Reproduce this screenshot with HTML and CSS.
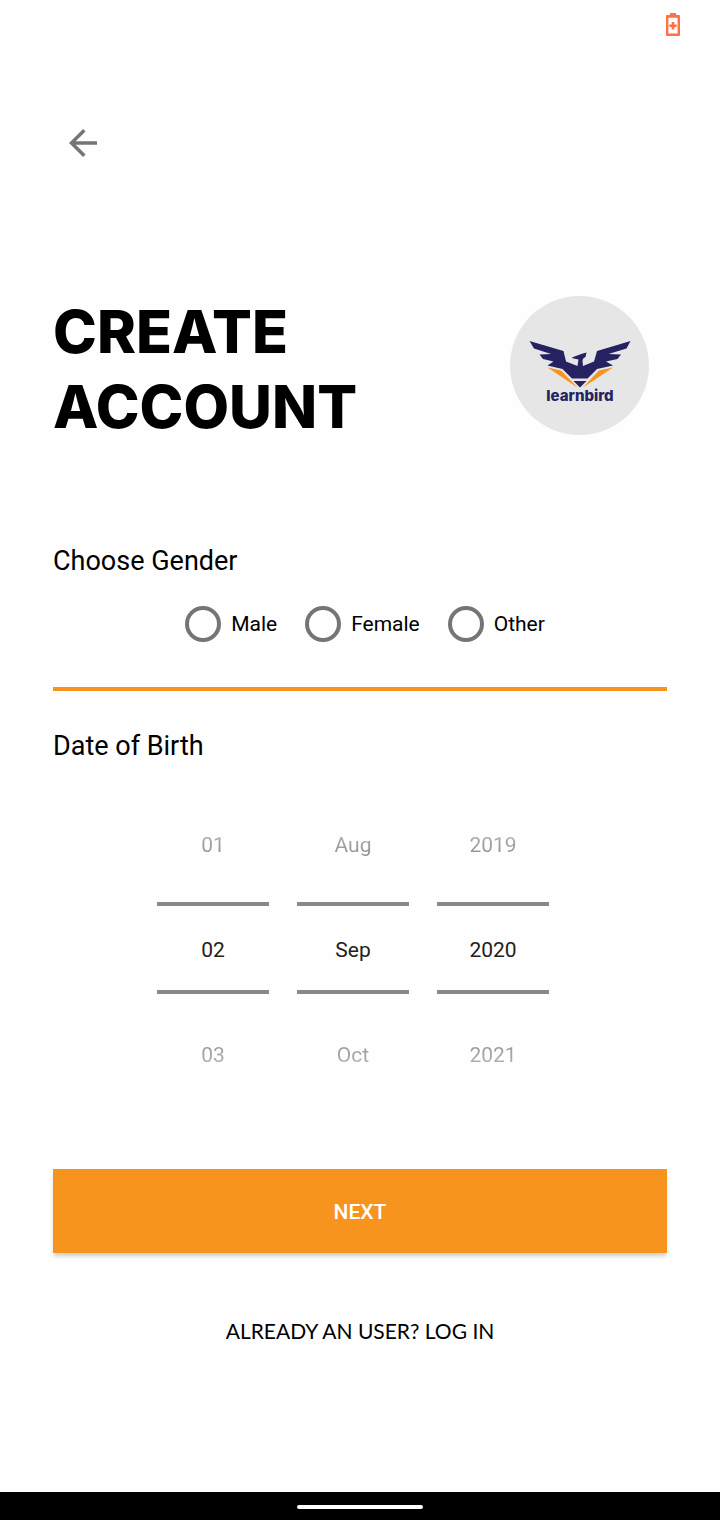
FILE: index.html
```html
<!DOCTYPE html>
<html lang="en">
<head>
<meta charset="utf-8">
<meta name="viewport" content="width=device-width, initial-scale=1">
<title>Create account</title>
<link rel="stylesheet" href="styles.css">
</head>
<body>
<header class="status-bar">
  <svg class="battery" viewBox="0 0 14 23" role="img" aria-label="Battery saver">
    <path fill="#ff7043" fill-rule="evenodd" d="M4 0h6v2h3q1 0 1 1v19q0 1-1 1H1q-1 0-1-1V3q0-1 1-1h3zM2.400 4.800v15.600h9.200V4.800z"/>
    <path fill="#ff7043" d="M5.700 9h2.600v2.400h2.400v2.600H8.300v2.400H5.700V14H3.300v-2.600h2.400z"/>
  </svg>
</header>
<main class="screen">
  <button class="back" type="button" aria-label="Back">
    <svg class="back-icon" viewBox="0 0 28 28" fill="none" stroke="#757575" stroke-width="3.500"><path d="M28 14H3M15.300 1.300L2.500 14l12.800 12.700"/></svg>
  </button>
  <div class="intro">
    <h1 class="title">CREATE<br>ACCOUNT</h1>
    <svg class="logo" viewBox="0 0 139 139" role="img" aria-label="learnbird">
      <circle cx="69.500" cy="69.500" r="69.500" fill="#e6e6e6"/>
      <g fill="#262262">
        <path d="M19.500 45L53.500 55L56 65.500L67.500 70L68.500 63.500L61.500 62Q67 59 76.500 56.500L75.500 61Q72.500 62 72.500 65L73 70L84 65.500L87 55L120.500 45L116.500 52.500L98.500 58L111 58.500L107.500 63L96 65.500L103 69.500L87 73L77.500 82.500H62L52.500 73L37.500 69.500L43.500 65.500L33 63L29.500 58.500L41 58L24 52.500Z"/>
        <path d="M63.500 85H76.500L70 91.500Z"/>
      </g>
      <g fill="#f7941d"><path d="M37.500 71.500L51 74.500L67.500 91.500Z"/><path d="M103 71.500L89 74.500L73 91.500Z"/></g>
      <text class="logo-word" x="70" y="105" text-anchor="middle">learnbird</text>
    </svg>
  </div>
  <form class="form">
    <fieldset class="gender">
      <legend class="label">Choose Gender</legend>
      <div class="options">
        <label class="option"><input class="radio" type="radio" name="gender" value="male">Male</label>
        <label class="option"><input class="radio" type="radio" name="gender" value="female">Female</label>
        <label class="option"><input class="radio" type="radio" name="gender" value="other">Other</label>
      </div>
    </fieldset>
    <fieldset class="birth">
      <legend class="label">Date of Birth</legend>
      <div class="pickers">
        <div class="picker">
          <button class="step prev" type="button">01</button>
          <input class="value" type="text" aria-label="Day" value="02">
          <button class="step next" type="button">03</button>
        </div>
        <div class="picker">
          <button class="step prev" type="button">Aug</button>
          <input class="value" type="text" aria-label="Month" value="Sep">
          <button class="step next" type="button">Oct</button>
        </div>
        <div class="picker">
          <button class="step prev" type="button">2019</button>
          <input class="value" type="text" aria-label="Year" value="2020">
          <button class="step next" type="button">2021</button>
        </div>
      </div>
    </fieldset>
    <button class="submit" type="submit">NEXT</button>
  </form>
  <a class="login" href="#login">ALREADY AN USER? LOG IN</a>
</main>
<footer class="nav-bar"><div class="handle"></div></footer>
</body>
</html>
```
FILE: styles.css
```css
* { box-sizing: border-box; }

body {
  margin: 0;
  min-height: 100vh;
  display: flex;
  flex-direction: column;
  background: #fefefe;
  color: #000;
  font-family: Roboto, sans-serif;
  font-size: 21px;
  line-height: 28px;
}

button, input { font: inherit; color: inherit; }

svg { display: block; }

.status-bar {
  display: flex;
  justify-content: flex-end;
  padding: 13px 40px 12px;
}

.battery { width: 14px; height: 23px; }

.screen {
  flex: 1;
  display: flex;
  flex-direction: column;
  padding: 65px 53px 40px;
}

.back {
  align-self: flex-start;
  padding: 16px;
  border: 0;
  background: none;
}

.back-icon { width: 28px; height: 28px; }

.intro {
  display: flex;
  justify-content: space-between;
  align-items: center;
  margin-top: 113px;
  padding-right: 18px;
}

.title {
  margin: 0;
  padding-top: 8px;
  font-family: Inter, sans-serif;
  font-weight: 800;
  font-size: 59px;
  line-height: 75px;
}

.logo { width: 139px; height: 139px; }

.logo-word {
  fill: #262262;
  font-family: Inter, sans-serif;
  font-weight: 800;
  font-size: 15px;
}

.form { display: flex; flex-direction: column; }

.gender, .birth {
  min-width: 0;
  margin: 0;
  padding: 0;
  border: 0;
}

.gender {
  margin-top: 103px;
  padding-bottom: 45px;
  border-bottom: 4px solid #f7941d;
}

.label {
  padding: 0;
  font-size: 27px;
  line-height: 28px;
}

.options {
  display: flex;
  justify-content: center;
  gap: 28px;
  margin-top: 31px;
  padding-left: 10px;
}

.option {
  display: flex;
  align-items: center;
  gap: 10px;
}

.radio {
  appearance: none;
  width: 36px;
  height: 36px;
  margin: 0;
  border: 4px solid #757575;
  border-radius: 50%;
}

.radio:checked { box-shadow: inset 0 0 0 6px #fefefe; background: #f7941d; }

.birth { margin-top: 41px; }

.pickers {
  display: flex;
  justify-content: center;
  gap: 28px;
  margin-top: 43px;
  padding-right: 14px;
}

.picker {
  width: 112px;
  display: flex;
  flex-direction: column;
}

.step {
  height: 99px;
  padding: 0;
  border: 0;
  background: none;
  color: transparent;
  background-clip: text;
}

.prev {
  padding-bottom: 16px;
  background-image: linear-gradient(#ccc 10%, #888 60%);
}

.next {
  padding-top: 22px;
  background-image: linear-gradient(#888 40%, #ccc 90%);
}

.value {
  width: 100%;
  height: 92px;
  padding: 4px 0 0;
  border: solid #888;
  border-width: 4px 0;
  background: none;
  color: #212121;
  text-align: center;
}

.submit {
  height: 84px;
  margin-top: 76px;
  padding-top: 2px;
  border: 0;
  background: #f7941d;
  box-shadow: 0 4px 4px -1px #00000033;
  color: #fff;
  font-weight: 500;
}

.login {
  align-self: center;
  margin-top: 64px;
  color: #000;
  font-family: Lato, sans-serif;
  text-decoration: none;
}

.nav-bar {
  display: flex;
  justify-content: center;
  padding: 13px 0 11px;
  background: #000;
}

.handle {
  width: 126px;
  height: 4px;
  border-radius: 2px;
  background: #fff;
}
```
